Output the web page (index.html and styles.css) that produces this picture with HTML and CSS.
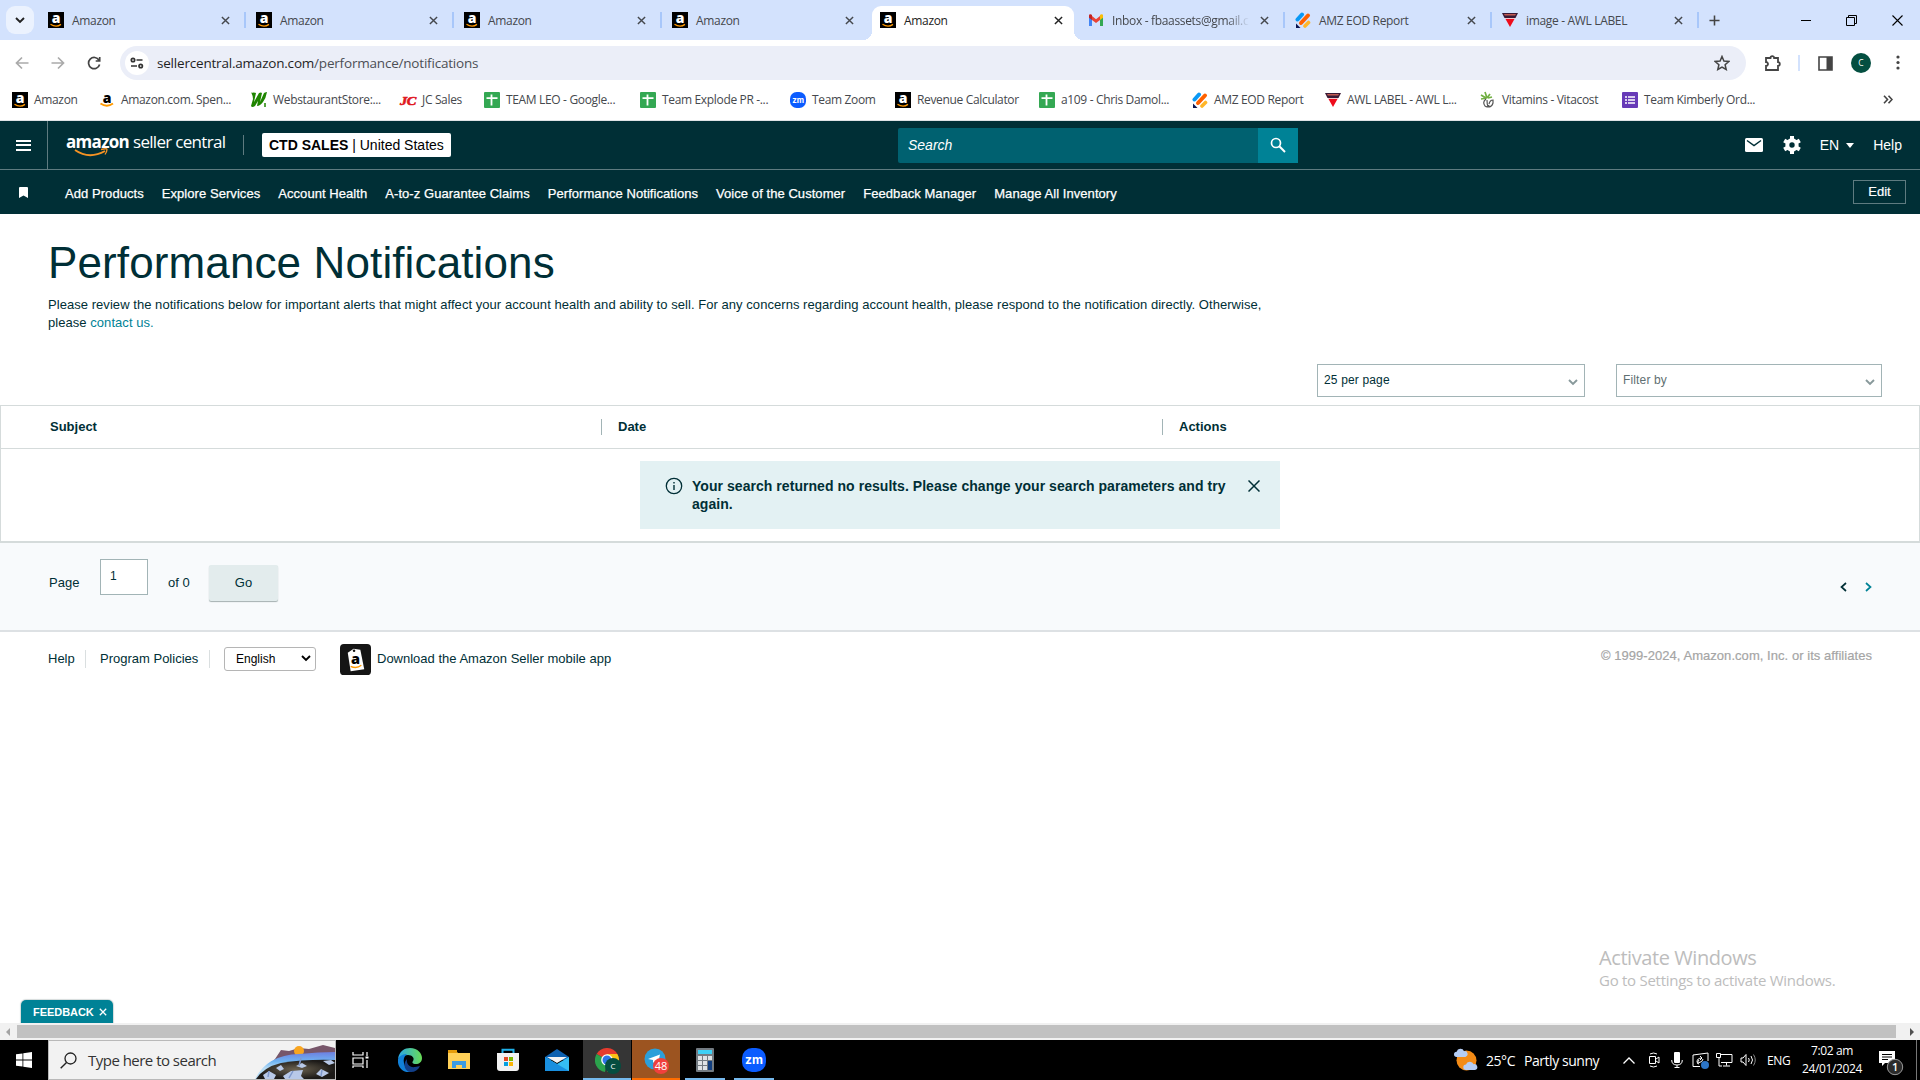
FILE: index.html
```html
<html>
<head>
  <meta charset="utf-8">
  <title>Amazon</title>
  <link rel="stylesheet" href="styles.css">
</head>
<body>
  <!-- shared icons -->
  <svg class="defs">
    <symbol id="amazon" viewBox="0 0 16 16">
      <rect width="16" height="16" fill="#000"/>
      <text x="8" y="11" text-anchor="middle" font-family="Open Sans" font-weight="800" font-size="14" fill="#fff">a</text>
      <path d="M2.5 12.2Q8 16 13 12.4" stroke="#f90" stroke-width="1.3" fill="none"/>
    </symbol>
    <symbol id="sheet" viewBox="0 0 16 16">
      <rect width="16" height="16" rx="1" fill="#34a853"/>
      <path d="M7.5 2.5v11M2.5 6.2h11" stroke="#fff" stroke-width="1.8"/>
    </symbol>
    <symbol id="jot" viewBox="0 0 16 16">
      <path d="M2.5 7.5L7 2.5" stroke="#0a99f5" stroke-width="4" stroke-linecap="round"/>
      <path d="M6 11L13 3.5" stroke="#ff6100" stroke-width="4" stroke-linecap="round"/>
      <path d="M10 14L13.5 10.5" stroke="#ffb629" stroke-width="3.6" stroke-linecap="round"/>
      <path d="M1 11.5V16h4.5z" fill="#0a1551"/>
    </symbol>
    <symbol id="awl" viewBox="0 0 16 16">
      <path d="M0 1h16l-2.5 5h-11z" fill="#3a1a35"/>
      <path d="M2 2h12l-.8 1.400H2.800z" fill="#c05a52"/>
      <path d="M3.500 7h9L8 15z" fill="#ee0c1c"/>
      <path d="M3 6.500h10" stroke="#f3c4c8"/>
    </symbol>
    <symbol id="zm" viewBox="0 0 24 24">
      <rect width="24" height="24" rx="10" fill="#0b5cff"/>
      <text x="12" y="16.300" text-anchor="middle" font-family="Inter" font-weight="700" font-size="12" fill="#fff">zm</text>
    </symbol>
    <symbol id="x" viewBox="0 0 10 10"><path d="M1 1l8 8M9 1L1 9" stroke="currentColor" stroke-width="1.6"/></symbol>
    <symbol id="down" viewBox="0 0 10 7"><path d="M1 1l4 4 4-4" fill="none" stroke="currentColor" stroke-width="1.900"/></symbol>
    <symbol id="lens" viewBox="0 0 16 16">
      <circle cx="6" cy="6" r="4.500" fill="none" stroke="currentColor" stroke-width="1.700"/>
      <path d="M9.300 9.300L15 15" stroke="currentColor" stroke-width="2"/>
    </symbol>
    <symbol id="cloud" viewBox="0 0 16 10"><path d="M3 10a3 3 0 0 1 0-6 4.500 4.500 0 0 1 8.500-.5A3.200 3.200 0 0 1 13 10z" fill="#b5cdf5"/></symbol>
  </svg>

  <!-- browser tabs -->
  <div class="tabstrip">
    <div class="tab-search"><svg width="10" height="7"><use href="#down"/></svg></div>
    <div class="tab"><svg class="fav"><use href="#amazon"/></svg><span>Amazon</span><svg class="close"><use href="#x"/></svg></div>
    <div class="tab"><svg class="fav"><use href="#amazon"/></svg><span>Amazon</span><svg class="close"><use href="#x"/></svg></div>
    <div class="tab"><svg class="fav"><use href="#amazon"/></svg><span>Amazon</span><svg class="close"><use href="#x"/></svg></div>
    <div class="tab last"><svg class="fav"><use href="#amazon"/></svg><span>Amazon</span><svg class="close"><use href="#x"/></svg></div>
    <div class="tab active"><svg class="fav"><use href="#amazon"/></svg><span>Amazon</span><svg class="close"><use href="#x"/></svg></div>
    <div class="tab">
      <svg class="fav" viewBox="0 0 16 16">
        <path d="M1 3v11h3V6.500z" fill="#4285f4"/><path d="M15 3v11h-3V6.500z" fill="#34a853"/>
        <path d="M4 4l4 3.200L12 4v4l-4 3-4-3z" fill="#ea4335"/><path d="M1 3.500C1 2 3 1.800 4 3v5L1 5.800z" fill="#c5221f"/><path d="M15 3.500C15 2 13 1.800 12 3v5l3-2.200z" fill="#fbbc04"/>
      </svg>
      <span class="fade">Inbox - fbaassets@gmail.c</span><svg class="close"><use href="#x"/></svg>
    </div>
    <div class="tab"><svg class="fav"><use href="#jot"/></svg><span>AMZ EOD Report</span><svg class="close"><use href="#x"/></svg></div>
    <div class="tab"><svg class="fav"><use href="#awl"/></svg><span>image - AWL LABEL</span><svg class="close"><use href="#x"/></svg></div>
    <svg class="plus" viewBox="0 0 12 12"><path d="M6 .5v11M.5 6h11" stroke="#444" stroke-width="1.700"/></svg>
    <div class="win-buttons">
      <svg width="10" height="10"><path d="M0 5.500h10" stroke="#000"/></svg>
      <svg width="11" height="11"><path d="M.5 2.500h8v8h-8zM2.500 2.500v-2h8v8h-2" fill="none" stroke="#000"/></svg>
      <svg width="11" height="11"><path d="M.5.5l10 10M10.500.5l-10 10" stroke="#000" stroke-width="1.100"/></svg>
    </div>
  </div>

  <!-- address bar -->
  <div class="toolbar">
    <svg class="nav-btn off" viewBox="0 0 14 14"><path d="M13.500 7H1.500M7 1.500L1.500 7 7 12.500"/></svg>
    <svg class="nav-btn off" viewBox="0 0 14 14"><path d="M.5 7h12M7 1.500L12.500 7 7 12.500"/></svg>
    <svg class="nav-btn" viewBox="0 0 14 14"><path d="M12 4.200A5.600 5.600 0 1 0 12.600 8.500M12.700 1v4h-4"/></svg>
    <div class="omnibox">
      <div class="site-info"><svg width="14" height="12" fill="none" stroke="#333" stroke-width="1.700"><circle cx="3" cy="3" r="1.700"/><path d="M6.500 3h6M1 9h6"/><circle cx="10.700" cy="9" r="1.700"/></svg></div>
      <div class="url"><b>sellercentral.amazon.com</b>/performance/notifications</div>
      <svg class="star" viewBox="0 0 16 16"><path d="M8 1.500l1.900 4.600 4.900.4-3.700 3.200 1.100 4.800L8 12l-4.200 2.500 1.100-4.800L1.200 6.500l4.900-.4z" fill="none" stroke="#444" stroke-width="1.500"/></svg>
    </div>
    <svg class="puzzle" viewBox="0 0 18 18"><path d="M2 4h4.500a1.800 1.800 0 0 1 3.600 0H14v4.200a1.800 1.800 0 0 1 0 3.600V16H2v-4a2 2 0 0 0 0-4z" fill="none" stroke="#444" stroke-width="1.800"/></svg>
    <div class="bar-sep"></div>
    <svg class="panel" viewBox="0 0 15 15"><path d="M1 1h13v13H1z" fill="none" stroke="#444" stroke-width="1.600"/><path d="M8.500 1H14v13H8.500z" fill="#444"/></svg>
    <div class="avatar">C</div>
    <svg class="dots" width="4" height="16" fill="#444"><circle cx="2" cy="2" r="1.600"/><circle cx="2" cy="7.500" r="1.600"/><circle cx="2" cy="13" r="1.600"/></svg>
  </div>

  <!-- bookmarks -->
  <div class="bookmarks">
    <div class="bm"><svg class="fav"><use href="#amazon"/></svg>Amazon</div>
    <div class="bm"><svg class="fav" viewBox="0 0 16 16"><text x="8" y="11" text-anchor="middle" font-family="Open Sans" font-weight="800" font-size="14">a</text><path d="M1.500 11.500Q8 16 14 11.500" stroke="#f90" stroke-width="1.800" fill="none"/></svg>Amazon.com. Spen...</div>
    <div class="bm"><svg class="fav" viewBox="0 0 16 16"><path d="M0 1q3-1 5 0L3 10l5-9q2-1 3 0L9 10l4-9q2-1 3-1-1 6-4 10-3 4-6 4l1-5-3 5q-3 2-4 0l2-7q0-3-2-7z" fill="#1f8500"/><path d="M14 11v4" stroke="#1f8500" stroke-width="1.500"/></svg>WebstaurantStore:...</div>
    <div class="bm"><svg class="fav" viewBox="0 0 16 16"><text x="0" y="12.500" font-family="Liberation Serif" font-weight="700" font-style="italic" font-size="13" textLength="16" lengthAdjust="spacingAndGlyphs" fill="#e01821" stroke="#e01821" stroke-width=".6">JC</text></svg>JC Sales</div>
    <div class="bm"><svg class="fav"><use href="#sheet"/></svg>TEAM LEO - Google...</div>
    <div class="bm"><svg class="fav"><use href="#sheet"/></svg>Team Explode PR -...</div>
    <div class="bm"><svg class="fav"><use href="#zm"/></svg>Team Zoom</div>
    <div class="bm"><svg class="fav"><use href="#amazon"/></svg>Revenue Calculator</div>
    <div class="bm"><svg class="fav"><use href="#sheet"/></svg>a109 - Chris Damol...</div>
    <div class="bm"><svg class="fav"><use href="#jot"/></svg>AMZ EOD Report</div>
    <div class="bm"><svg class="fav"><use href="#awl"/></svg>AWL LABEL - AWL L...</div>
    <div class="bm"><svg class="fav" viewBox="0 0 16 16" fill="none"><path d="M1 3l5 3M5 0l2 6M10 2L7 6M1 7l6-1M8 6l4-1" stroke="#72b043" stroke-width="1.700"/><path d="M6 7q-4 3-1 7 3 2 4-1M7 8q0 4 1 7 4 0 5-4V8q-3 0-4 4" stroke="#555" stroke-width="1.200"/></svg>Vitamins - Vitacost</div>
    <div class="bm"><svg class="fav" viewBox="0 0 16 16"><rect width="16" height="16" rx="1" fill="#673ab7"/><path d="M3 5h2M3 8h2M3 11h2M6 5h7M6 8h7M6 11h7" stroke="#fff" stroke-width="1.500"/></svg>Team Kimberly Ord...</div>
    <svg class="more" viewBox="0 0 10 9"><path d="M1 .8l3.500 3.700L1 8.200M5.500.8L9 4.500 5.500 8.200" fill="none" stroke="#444" stroke-width="1.600"/></svg>
  </div>

  <!-- seller central header -->
  <div class="header">
    <div class="burger"><i></i><i></i><i></i></div>
    <div class="logo"><b>amazon</b><span>seller central</span>
      <svg class="smile" width="36" height="10"><path d="M1 2Q15 12 31 3" stroke="#f59324" stroke-width="1.900" fill="none"/><path d="M27 1.500q6-1.500 6 0 0 2-2 5" stroke="#f59324" stroke-width="1.300" fill="none"/></svg>
    </div>
    <div class="head-sep"></div>
    <div class="account"><b>CTD SALES</b> | United States</div>
    <div class="search">Search</div>
    <div class="search-btn"><svg width="16" height="16"><use href="#lens"/></svg></div>
    <div class="head-right">
      <svg width="18" height="14" class="mail"><rect width="18" height="14" rx="1.500" fill="#fff"/><path d="M2 2.500l7 5 7-5" fill="none" stroke="#002f36" stroke-width="1.500"/></svg>
      <svg width="18" height="18" viewBox="0 0 18 18" class="gear"><circle cx="9" cy="9" r="4.700" fill="none" stroke="#fff" stroke-width="4"/><path d="M9 0v4M9 14v4M1.200 4.500l3.500 2M13.300 11.500l3.500 2M16.800 4.500l-3.500 2M4.700 11.500l-3.500 2" stroke="#fff" stroke-width="4"/></svg>
      <span class="lang">EN</span><span class="caret"></span><span>Help</span>
    </div>
  </div>
  <div class="subnav">
    <svg class="ribbon" width="9" height="11"><path d="M0 1q0-1 1-1h7q1 0 1 1v10L4.500 8.500 0 11z" fill="#fff"/></svg>
    <div class="links">
      <a>Add Products</a><a>Explore Services</a><a>Account Health</a><a>A-to-z Guarantee Claims</a><a>Performance Notifications</a><a>Voice of the Customer</a><a>Feedback Manager</a><a>Manage All Inventory</a>
    </div>
    <div class="edit">Edit</div>
  </div>

  <!-- page content -->
  <div class="page">
    <h1>Performance Notifications</h1>
    <p class="intro">Please review the notifications below for important alerts that might affect your account health and ability to sell. For any concerns regarding account health, please respond to the notification directly. Otherwise,<br>please <a>contact us.</a></p>
    <div class="filters">
      <div class="dropdown">25 per page<svg width="10" height="7"><use href="#down"/></svg></div>
      <div class="dropdown hint">Filter by<svg width="10" height="7"><use href="#down"/></svg></div>
    </div>
    <div class="table">
      <div class="thead">
        <div class="th">Subject</div>
        <div class="th">Date</div>
        <div class="th">Actions</div>
      </div>
      <div class="tbody">
        <div class="alert">
          <svg class="info" width="18" height="18"><circle cx="9" cy="9" r="7.700" fill="none" stroke="#002f36" stroke-width="1.300"/><path d="M9 8v5M9 5v1.500" stroke="#002f36" stroke-width="1.400"/></svg>
          <div class="alert-text">Your search returned no results. Please change your search parameters and try<br>again.</div>
          <svg class="alert-close" width="12" height="12" viewBox="0 0 12 12"><path d="M.5.5l11 11M11.500.5l-11 11" stroke="#002f36" stroke-width="1.500"/></svg>
        </div>
      </div>
    </div>
    <div class="pager">
      <span class="lbl">Page</span>
      <div class="page-input">1</div>
      <span class="lbl of">of 0</span>
      <div class="go">Go</div>
      <svg class="prev" width="7" height="10"><path d="M6 1L1.500 5 6 9" fill="none" stroke="#002f36" stroke-width="1.700"/></svg>
      <svg class="next" width="7" height="10"><path d="M1 1l4.500 4L1 9" fill="none" stroke="#008296" stroke-width="1.700"/></svg>
    </div>
    <div class="footer">
      <span class="f-help">Help</span>
      <span class="f-policy">Program Policies</span>
      <div class="f-lang">English<svg width="10" height="7"><use href="#down"/></svg></div>
      <svg class="app" width="31" height="31" viewBox="0 0 32 32"><rect width="32" height="32" rx="4" fill="#151515"/><path d="M8 9l6-4 7 1 4 20-14 2z" fill="#fff"/><circle cx="14.500" cy="7" r="1.300" fill="#151515"/><text x="16" y="21" text-anchor="middle" font-family="Open Sans" font-weight="800" font-size="15">a</text><path d="M11 23q6 3 11-1" stroke="#f90" stroke-width="1.400" fill="none"/></svg>
      <span class="f-app">Download the Amazon Seller mobile app</span>
      <span class="copy">© 1999-2024, Amazon.com, Inc. or its affiliates</span>
    </div>
    <div class="watermark"><div>Activate Windows</div><p>Go to Settings to activate Windows.</p></div>
    <div class="feedback">FEEDBACK<svg width="8" height="8"><use href="#x"/></svg></div>
  </div>
  <div class="scrollbar"><i class="left"></i><div class="thumb"></div><i class="right"></i></div>

  <!-- windows taskbar -->
  <div class="taskbar">
    <div class="start"><svg width="16" height="16" fill="#fff"><path d="M0 2.300L6.500 1.400V7.600H0zM7.300 1.300L16 0v7.600H7.300zM0 8.400h6.500v6.200L0 13.700zM7.300 8.400H16V16l-8.700-1.300z"/></svg></div>
    <div class="win-search">
      <svg class="glass" width="17" height="17"><circle cx="10.500" cy="6.500" r="5.500" fill="none" stroke="#222" stroke-width="1.300"/><path d="M6.500 10.500L.7 16.300" stroke="#222" stroke-width="1.400"/></svg>
      <span>Type here to search</span>
      <svg class="art" width="80" height="38">
        <defs>
          <linearGradient id="sky" x2="0" y2="1"><stop offset="0" stop-color="#6d7fe0"/><stop offset=".35" stop-color="#6fb4f2"/><stop offset=".6" stop-color="#b8dcf5"/></linearGradient>
          <radialGradient id="cave"><stop offset="0" stop-color="#6b6250"/><stop offset="1" stop-color="#1c1a18"/></radialGradient>
        </defs>
        <path d="M20 18l6-9 8 1 10-3 10 1 14-4 12 3v13H18z" fill="#77566a"/>
        <circle cx="44" cy="10" r="5" fill="#f9a51f"/>
        <path d="M0 38Q12 14 44 13q20-2 36-2v27z" fill="url(#sky)"/>
        <path d="M1 38q8-12 25-16 25-4 54-3v19z" fill="url(#cave)"/>
        <path d="M8 34l6-4 7 4-2 4h-9zM21 27l5-3 3 4-4 2zM28 35l8-5 12-1-2 6 3 3H30zM41 25l6-3 5 3-5 2zM61 33l5-5 8 4-7 4zM68 20l8-1 4 3-6 2z" fill="#b8c9e8"/>
        <path d="M14 30l-1 6M38 30l-4 7M67 29l-1 6M46 17l-2 8" stroke="#7f99cc" stroke-width="1.500" fill="none"/>
      </svg>
    </div>
    <div class="task"><svg width="17" height="16" fill="none" stroke="#fff" stroke-width="1.200"><path d="M1 0v3h10V0M1 6h10v6H1zM1 16v-2h10v2M15 0v4M15 8v8"/><path d="M13.500 4.500h3v2h-3z" fill="#fff" stroke="none"/></svg></div>
    <div class="task">
      <svg width="24" height="24" viewBox="0 0 24 24"><defs><linearGradient id="e1"><stop offset="0" stop-color="#2aa7e8"/><stop offset="1" stop-color="#69dc55"/></linearGradient></defs>
        <path d="M0 11C1 3 7 0 12 0c8 0 12 6 12 10 0 4-3 6-6 6-4 0-4-2-3-3 2-3-1-6-5-6-5 0-9 3-10 4z" fill="url(#e1)"/>
        <path d="M0 11c2-4 6-5 9-5-4 3-4 8-2 12 2 5 7 6 8 6C5 26-1 19 0 11z" fill="#1180d8"/>
        <path d="M9 11c-1 5 3 9 8 8 2 0 4-1 5-1-2 4-5 6-9 6-6 0-9-8-4-13z" fill="#123f88"/></svg>
    </div>
    <div class="task"><svg width="22" height="20"><path d="M0 1h8l2 2h12v16H0z" fill="#ffd058"/><path d="M0 0h9v3H0z" fill="#e59c0b"/><path d="M4 11h14v7h-4v-3H8v3H4z" fill="#3c9be2"/></svg></div>
    <div class="task"><svg width="24" height="24"><path d="M6.500 6V1.700h11V6" fill="none" stroke="#1fb0e8" stroke-width="2"/><path d="M1 5h22v15q0 3-3 3H4q-3 0-3-3z" fill="#f2f2f2"/><path d="M8 9h4v4H8z" fill="#e34c26"/><path d="M13 9h4v4h-4z" fill="#7db900"/><path d="M8 14h4v4H8z" fill="#05a0e0"/><path d="M13 14h4v4h-4z" fill="#fbb507"/></svg></div>
    <div class="task"><svg width="24" height="22"><path d="M0 8l12-8 12 8v3H0z" fill="#0c60b0"/><path d="M0 8l12 7 12-7v14H0z" fill="#35bdf2"/><path d="M0 22V8l24 14z" fill="#198fdf"/><path d="M2 8h20l-10 6z" fill="#f3f3f3"/></svg></div>
    <div class="task chrome">
      <svg width="26" height="26" viewBox="0 0 26 26"><path d="M12 12L1.600 6A12 12 0 0 1 22.400 6z" fill="#e63b2e"/><path d="M12 12V6h10.400A12 12 0 0 1 12 24z" fill="#fbc116"/><path d="M12 12l-2 12A12 12 0 0 1 1.600 6z" fill="#2ba24c"/><circle cx="12" cy="12" r="5.800" fill="#fff"/><circle cx="12" cy="12" r="4.500" fill="#2f74e8"/><circle cx="18" cy="18" r="8" fill="#064d40"/><text x="18" y="21" text-anchor="middle" font-family="Open Sans" font-size="8" fill="#fff">C</text></svg>
    </div>
    <div class="task telegram">
      <svg width="26" height="26" viewBox="0 0 26 26"><circle cx="11" cy="11" r="10.500" fill="#2c9fd9"/><path d="M4 11l12-4.500-2 9-3-2.500-2 2v-3z" fill="#fff"/><circle cx="17" cy="18" r="8" fill="#f0403c"/><text x="17" y="22" text-anchor="middle" font-family="Open Sans" font-size="11" fill="#fff">48</text></svg>
    </div>
    <div class="task open"><svg width="18" height="24"><rect width="18" height="24" rx="1" fill="#737b82"/><path d="M2 2h14v4H2z" fill="#3dd0f5"/><path d="M2 8h4v4H2zM7 8h4v4H7zM12 8h4v4h-4zM2 13h4v4H2zM7 13h4v4H7zM2 18h4v4H2zM7 18h4v4H7z" fill="#dfe3e6"/><path d="M12 13h4v9h-4z" fill="#123f80"/></svg></div>
    <div class="task open"><svg width="24" height="24"><use href="#zm"/></svg></div>

    <div class="tray">
      <svg class="weather" width="24" height="24"><circle cx="12.500" cy="12.500" r="10" fill="#f38b16"/><use href="#cloud" x="0" y="0" width="14" height="9"/><use href="#cloud" x="9" y="13" width="15" height="9"/></svg>
      <span class="temp">25°C</span><span class="sky">Partly sunny</span>
      <svg class="t-up" width="12" height="7"><path d="M.5 6.500L6 1l5.500 5.500" fill="none" stroke="#fff" stroke-width="1.300"/></svg>
      <svg class="t-cam" width="12" height="16" fill="none" stroke="#fff"><path d="M1.500 4.500h6v7h-6zM8 7l3-2v6L8 9M2 2Q5.500 0 9 2M2 14q3.500 2 7 0"/></svg>
      <svg class="t-mic" width="12" height="16"><rect x="3" width="6" height="11" rx="1" fill="#fff"/><path d="M.7 8q0 5 5.300 5t5.300-5M6 13v2.500M3.500 15.500h5" stroke="#fff" fill="none"/></svg>
      <svg class="t-sync" width="17" height="17" fill="none" stroke="#fff"><path d="M8 14.500H1V3l15-2v8M5 10q0-4 5-4M8 4l2 2-2 2M11 7q0 3-5 4M7 8l-2 3 2 1"/><circle cx="13" cy="13" r="4" fill="#2c75c7" stroke="none"/></svg>
      <svg class="t-net" width="17" height="14" fill="none" stroke="#fff"><path d="M5 1.500h11v8H5M3 5v8M.5.500h4v4h-4zM10.500 9.500v3M7 13h7M3 13h3"/></svg>
      <svg class="t-vol" width="17" height="14" fill="none" stroke="#fff"><path d="M1 5h2l3-3.500v11L3 9H1zM8.500 5q1.500 2 0 4M11 3q3 4 0 8"/><path d="M13.500 1.500q3.500 5.500 0 11" stroke="#888"/></svg>
      <span class="eng">ENG</span>
      <div class="clock">7:02 am<br>24/01/2024</div>
      <svg class="note" width="25" height="26"><path d="M0 0h16v12H6l-3 3v-3H0z" fill="#fff"/><path d="M3 3.500h10M3 6h10M3 8.500h6" stroke="#000"/><circle cx="16" cy="16" r="7.700" fill="#2b2b2b" stroke="#999"/><text x="16" y="20" text-anchor="middle" font-family="Open Sans" font-size="11" font-weight="600" fill="#fff">1</text></svg>
    </div>
  </div>
</body>
</html>
```
FILE: styles.css
```css
* {
  box-sizing: border-box;
}
body {
  margin: 0;
  width: 1920px;
  height: 1080px;
  overflow: hidden;
  display: flex;
  flex-direction: column;
  background: #fff;
  color: #002f36;
  font-family: "Liberation Sans", Arial, sans-serif;
  font-size: 13px;
}
svg {
  display: block;
  flex: none;
}
.defs {
  display: none;
}
.fav {
  width: 16px;
  height: 16px;
  overflow: visible;
}

/* tabs */
.tabstrip {
  display: flex;
  align-items: center;
  height: 40px;
  background: #d3e2fd;
  font-family: "Open Sans", sans-serif;
  font-size: 12px;
  letter-spacing: -0.33px;
  color: #45484d;
}
.tab-search {
  width: 28px;
  height: 28px;
  margin: 0 6px;
  border-radius: 9px;
  background: #ebf2fe;
  color: #222;
  display: flex;
  align-items: center;
  justify-content: center;
}
.tab {
  position: relative;
  display: flex;
  align-items: center;
  width: 208px;
  height: 34px;
  padding: 0 18px 0 8px;
  flex: none;
}
.tab span {
  flex: 1;
  margin: 1px 8px 0;
  white-space: nowrap;
}
.tab::after {
  content: "";
  position: absolute;
  right: 2px;
  top: 9px;
  width: 2px;
  height: 16px;
  background: #a8c7fa;
}
.tab.last::after {
  display: none;
}
.tab .close {
  width: 9px;
  height: 9px;
}
.tab.active {
  align-self: flex-end;
  width: 202px;
  margin-right: 6px;
  padding: 0 11px 6px 8px;
  background: #fff;
  border-radius: 9px 9px 0 0;
  color: #222;
}
.tab.active ~ .tab {
  width: 207px;
}
.tab.active::before, .tab.active::after {
  content: "";
  display: block;
  position: absolute;
  top: auto;
  bottom: 0;
  width: 9px;
  height: 9px;
  background: radial-gradient(circle at 0 0, #d3e2fd 9px, #fff 9px);
}
.tab.active::before {
  left: -9px;
}
.tab.active::after {
  right: -9px;
  background: radial-gradient(circle at 100% 0, #d3e2fd 9px, #fff 9px);
}
.fade {
  -webkit-mask-image: linear-gradient(90deg, #000 82%, transparent 98%);
}
.plus {
  width: 11px;
  height: 11px;
  margin-left: 8px;
}
.win-buttons {
  display: flex;
  align-items: center;
  gap: 35px;
  margin-left: auto;
  padding-right: 17px;
}

/* address bar */
.toolbar {
  display: flex;
  align-items: center;
  height: 46px;
  padding: 0 18px 0 15px;
}
.nav-btn {
  width: 14px;
  height: 14px;
  margin-right: 22px;
  fill: none;
  stroke: #444;
  stroke-width: 1.7;
}
.nav-btn.off {
  stroke: #aaa;
}
.omnibox {
  display: flex;
  align-items: center;
  width: 1626px;
  height: 34px;
  margin-left: -3px;
  padding: 0 16px 0 5px;
  border-radius: 17px;
  background: #ebeef8;
}
.site-info {
  width: 24px;
  height: 24px;
  border-radius: 12px;
  background: #fff;
  display: flex;
  align-items: center;
  justify-content: center;
}
.url {
  flex: 1;
  margin-left: 8px;
  font-family: "Open Sans", sans-serif;
  font-size: 13.5px;
  letter-spacing: -0.2px;
  color: #4c4f55;
}
.url b {
  font-weight: 400;
  color: #1f1f1f;
}
.star {
  width: 16px;
  height: 16px;
}
.puzzle {
  width: 18px;
  height: 18px;
  margin-left: 18px;
}
.bar-sep {
  width: 2px;
  height: 16px;
  margin: 0 18px 0 16px;
  background: #d3e2fd;
}
.panel {
  width: 15px;
  height: 15px;
}
.avatar {
  width: 20px;
  height: 20px;
  margin: 0 25px 0 18px;
  border-radius: 10px;
  background: #044f41;
  color: #fff;
  font: 8.5px/20px "Open Sans", sans-serif;
  text-align: center;
}

/* bookmarks */
.bookmarks {
  display: flex;
  align-items: center;
  height: 35px;
  padding: 0 27px 7px 12px;
  border-bottom: 1px solid #dfe3e6;
  font-family: "Open Sans", sans-serif;
  font-size: 12px;
  letter-spacing: -0.34px;
  color: #45484d;
}
.bm {
  display: flex;
  align-items: center;
  gap: 6px;
  white-space: nowrap;
  flex: none;
}
.bm:nth-child(1) { width: 87px; }
.bm:nth-child(2) { width: 152px; }
.bm:nth-child(3) { width: 149px; }
.bm:nth-child(4) { width: 84px; }
.bm:nth-child(5) { width: 156px; }
.bm:nth-child(6) { width: 150px; }
.bm:nth-child(7) { width: 105px; }
.bm:nth-child(8) { width: 144px; }
.bm:nth-child(9) { width: 153px; }
.bm:nth-child(10) { width: 133px; }
.bm:nth-child(11) { width: 155px; }
.bm:nth-child(12) { width: 142px; }
.more {
  width: 10px;
  height: 9px;
  margin-left: auto;
}

/* seller central header */
.header {
  display: flex;
  align-items: center;
  height: 49px;
  background: #002f36;
  border-bottom: 1px solid #5e7b80;
  color: #fff;
  font-size: 14px;
}
.burger {
  display: flex;
  flex-direction: column;
  justify-content: center;
  gap: 2.5px;
  width: 48px;
  height: 48px;
  padding-left: 16px;
  border-right: 1px solid #5e7b80;
}
.burger i {
  width: 15px;
  height: 2px;
  background: #fff;
}
.logo {
  position: relative;
  display: flex;
  gap: 4px;
  width: 177px;
  padding-left: 18px;
  font: 17px/20px "Open Sans", sans-serif;
  letter-spacing: -0.7px;
  margin-top: -6px;
  white-space: nowrap;
}
.smile {
  position: absolute;
  left: 26px;
  top: 16px;
}
.head-sep {
  width: 1px;
  height: 20px;
  margin: 0 18px;
  background: #5e7b80;
}
.account {
  width: 189px;
  height: 24px;
  padding-left: 7px;
  border-radius: 2px;
  background: #fff;
  color: #000;
  line-height: 24px;
  white-space: nowrap;
}
.search {
  width: 360px;
  height: 35px;
  margin-left: 447px;
  padding-left: 10px;
  background: #006170;
  font-style: italic;
  line-height: 34px;
  border-radius: 2px 0 0 2px;
}
.search-btn {
  width: 40px;
  height: 35px;
  background: #008296;
  display: flex;
  align-items: center;
  justify-content: center;
}
.head-right {
  display: flex;
  align-items: center;
  margin-left: auto;
  padding-right: 18px;
}
.gear {
  margin: 0 19px 0 20px;
}
.lang {
  margin-right: 2px;
}
.caret {
  margin: 0 19px 0 5px;
  border: 4.5px solid transparent;
  border-top: 5px solid #fff;
  border-bottom: 0;
}
.subnav {
  display: flex;
  align-items: center;
  height: 44px;
  background: #002f36;
  color: #fff;
}
.ribbon {
  margin: 0 37px 0 19px;
}
.links {
  display: flex;
  gap: 18px;
  padding-top: 2px;
  letter-spacing: 0.06px;
  -webkit-text-stroke: 0.25px #fff;
}
.edit {
  width: 53px;
  height: 24px;
  margin: 0 14px 0 auto;
  border: 1px solid #5e7b80;
  line-height: 21px;
  text-align: center;
  -webkit-text-stroke: 0.2px #fff;
}

/* page */
.page {
  position: relative;
  height: 809px;
}
h1 {
  margin: 0;
  padding: 24px 0 0 48px;
  font-size: 44px;
  font-weight: 400;
  line-height: 50px;
  letter-spacing: 0.12px;
}
.intro {
  margin: 8px 0 0 48px;
  font-size: 13px;
  line-height: 18px;
  letter-spacing: 0.05px;
  white-space: nowrap;
}
.intro a {
  color: #008296;
}
.filters {
  display: flex;
  justify-content: flex-end;
  gap: 31px;
  margin-top: 32px;
  padding-right: 38px;
}
.dropdown {
  display: flex;
  align-items: center;
  justify-content: space-between;
  width: 268px;
  height: 33px;
  padding: 0 6px 2px 6px;
  border: 1px solid #a2b4b6;
  font-size: 12px;
  letter-spacing: 0.15px;
}
.dropdown svg {
  color: #88999b;
  margin-top: 5px;
}
.hint {
  width: 266px;
  color: #5f7072;
}
.table {
  margin-top: 8px;
  border: 1px solid #d5dbdb;
  border-bottom: 2px solid #d5dbdb;
}
.thead {
  display: flex;
  align-items: center;
  height: 43px;
  border-bottom: 1px solid #d5dbdb;
}
.th {
  width: 561px;
  height: 16px;
  padding-left: 16px;
  border-left: 1px solid #a2b4b6;
  font-weight: 700;
  font-size: 13px;
  line-height: 16px;
}
.th:first-child {
  width: 600px;
  padding-left: 49px;
  border: 0;
}
.tbody {
  height: 92px;
  padding-top: 12px;
}
.alert {
  display: flex;
  width: 640px;
  height: 68px;
  margin: 0 auto;
  background: #e3f1f3;
}
.info {
  margin: 16px 9px 0 25px;
}
.alert-text {
  width: 556px;
  padding-top: 16px;
  font-size: 14px;
  font-weight: 700;
  line-height: 18px;
  letter-spacing: 0.05px;
  white-space: nowrap;
}
.alert-close {
  margin-top: 19px;
}
.pager {
  display: flex;
  height: 89px;
  background: #f8fafc;
  border-bottom: 2px solid #dde1e4;
  font-size: 13px;
}
.lbl {
  width: 51px;
  margin: 32px 0 0 49px;
}
.page-input {
  width: 48px;
  height: 36px;
  margin-top: 16px;
  padding-left: 9px;
  border: 1px solid #a2b4b6;
  background: #fff;
  font-size: 12px;
  line-height: 33px;
}
.lbl.of {
  width: 40px;
  margin-left: 20px;
}
.go {
  width: 69px;
  height: 36px;
  margin: 22px 0 0 1px;
  border-radius: 2px;
  background: #e3eced;
  box-shadow: 0 1px 1px #a5b0b1;
  line-height: 35px;
  text-align: center;
}
.prev {
  margin: 39px 18px 0 auto;
}
.next {
  margin: 39px 48px 0 0;
}
.footer {
  display: flex;
  align-items: center;
  height: 53px;
  padding-left: 48px;
}
.f-help {
  width: 38px;
  border-right: 1px solid #dadfe0;
  line-height: 18px;
}
.f-policy {
  width: 124px;
  padding-left: 14px;
  border-right: 1px solid #dadfe0;
  line-height: 18px;
  white-space: nowrap;
}
.f-lang {
  display: flex;
  align-items: center;
  justify-content: space-between;
  width: 92px;
  height: 24px;
  margin-left: 14px;
  padding: 0 4px 0 11px;
  border: 1px solid #b5b5b5;
  border-radius: 3px;
  font-size: 12px;
  color: #000;
}
.app {
  margin: 2px 6px 0 24px;
}
.copy {
  margin: -6px 48px 0 auto;
  color: #a5a5a5;
  letter-spacing: 0.05px;
  -webkit-text-stroke: 0.2px #a5a5a5;
}
.watermark {
  position: absolute;
  left: 1599px;
  top: 730px;
  color: #bdbdbd;
  font-family: "Open Sans", sans-serif;
}
.watermark div {
  font-size: 20px;
  line-height: 28px;
  letter-spacing: -0.42px;
}
.watermark p {
  margin: 0;
  font-size: 15px;
  line-height: 17px;
  letter-spacing: -0.27px;
}
.feedback {
  position: absolute;
  left: 21px;
  bottom: 0;
  display: flex;
  align-items: center;
  gap: 5px;
  width: 92px;
  height: 23px;
  padding-left: 12px;
  border-radius: 5px 5px 0 0;
  background: #008296;
  box-shadow: 0 0 1px 1px #d5dbdb;
  color: #fff;
  font-size: 11px;
  font-weight: 700;
  letter-spacing: -0.05px;
}
.scrollbar {
  position: relative;
  display: flex;
  align-items: center;
  height: 17px;
  background: #f1f1f1;
}
.thumb {
  width: 1879px;
  height: 13px;
  background: #c1c1c1;
}
.scrollbar i {
  border: 4px solid transparent;
}
.scrollbar .left {
  margin: 0 7px 0 2px;
  border-right-color: #a3a3a3;
}
.scrollbar .right {
  margin-left: 14px;
  border-left-color: #505050;
}

/* taskbar */
.taskbar {
  display: flex;
  height: 40px;
  background: #000;
  color: #fff;
  font-family: "Open Sans", sans-serif;
}
.start {
  width: 48px;
  padding: 12px 16px;
}
.win-search {
  display: flex;
  align-items: center;
  width: 288px;
  border: 1px solid #b9b9b9;
  background: #f2f2f2;
  color: #333;
  font-size: 15px;
  letter-spacing: -0.52px;
}
.win-search span {
  flex: 1;
  margin-left: 11px;
  white-space: nowrap;
}
.glass {
  margin-left: 11px;
}
.task {
  display: flex;
  align-items: center;
  justify-content: center;
  width: 49px;
}
.chrome {
  width: 48px;
  margin: 0 1px 0 2px;
  padding: 3px 0 0 1px;
  background: #353535;
  border-bottom: 2px solid #76b9ed;
}
.telegram {
  width: 48px;
  padding: 3px 0 0 2px;
  background: #9c5420;
  border-bottom: 2px solid #ff6d00;
}
.open {
  width: 40px;
  margin: 0 4px 0 5px;
  padding-top: 2px;
  border-bottom: 2px solid #76b9ed;
}
.tray {
  display: flex;
  align-items: center;
  width: 463px;
  margin-left: auto;
  margin-right: 3px;
  border-right: 1px solid #777;
  font-size: 14px;
  letter-spacing: -0.45px;
  white-space: nowrap;
}
.temp {
  width: 38px;
  margin-left: 8px;
}
.sky {
  width: 99px;
}
.t-up {
  margin-right: 13px;
}
.t-cam {
  margin-right: 11px;
}
.t-mic {
  margin-right: 9px;
}
.t-sync {
  margin-right: 7px;
}
.t-net {
  margin-right: 7px;
}
.eng {
  width: 33px;
  margin-left: 10px;
  font-size: 12px;
  letter-spacing: -0.3px;
}
.clock {
  width: 64px;
  font-size: 12px;
  line-height: 18px;
  letter-spacing: -0.35px;
  text-align: center;
}
.note {
  margin: 8px 0 0 15px;
}
```
